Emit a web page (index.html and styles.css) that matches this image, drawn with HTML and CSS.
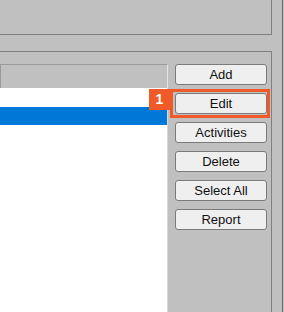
FILE: index.html
```html
<!DOCTYPE html>
<html lang="en">
<head>
  <meta charset="UTF-8" />
  <title>Activity List</title>
  <link rel="stylesheet" href="styles.css">
</head>
<body>
  <div class="window">
    <div class="top-panel"></div>
    <div class="main-panel">
      <div class="list">
        <div class="list-header"></div>
        <div class="list-body">
          <div class="row"></div>
          <div class="row selected"></div>
        </div>
      </div>
      <div class="buttons">
        <button class="btn">Add</button>
        <button class="btn highlighted">Edit<span class="badge">1</span></button>
        <button class="btn">Activities</button>
        <button class="btn">Delete</button>
        <button class="btn">Select All</button>
        <button class="btn">Report</button>
      </div>
    </div>
  </div>
</body>
</html>
```

FILE: styles.css
```css
* {
  margin: 0;
  padding: 0;
  box-sizing: border-box;
}
body {
  background: #c0c0c0;
  font-family: 'Liberation Sans', Arial, sans-serif;
  width: 284px;
  height: 312px;
  overflow: hidden;
}
.window {
  width: 283px;
  height: 312px;
  border-right: 1px solid #6a6a6a;
}
.top-panel {
  width: 272px;
  height: 35px;
  border-right: 1px solid #808080;
  border-bottom: 1px solid #808080;
}
.main-panel {
  margin-top: 16px;
  width: 272px;
  height: 261px;
  border-top: 1px solid #808080;
  border-right: 1px solid #808080;
  display: flex;
}
.list {
  width: 168px;
  padding-top: 12px;
  display: flex;
  flex-direction: column;
}
.list-header {
  height: 24px;
  border: 1px solid #9a9a9a;
  border-right-color: #e4e4e4;
  border-bottom: none;
}
.list-body {
  flex: 1;
  background: white;
  border-right: 1px solid #d8d8d8;
  padding-top: 1px;
}
.row {
  height: 18px;
}
.row.selected {
  background: #0078d7;
}
.buttons {
  padding: 12px 0 0 7px;
  display: flex;
  flex-direction: column;
  gap: 8px;
}
.btn {
  position: relative;
  width: 92px;
  height: 21px;
  background: #efefef;
  border: 1px solid #7a7a7a;
  border-radius: 3px;
  font-family: 'Liberation Sans', Arial, sans-serif;
  font-size: 13px;
  color: #111;
}
.btn.highlighted::after {
  content: '';
  position: absolute;
  left: -6px;
  right: -4px;
  top: -5px;
  bottom: -5px;
  border: 3px solid #f05a28;
}
.badge {
  position: absolute;
  left: -27px;
  top: -5px;
  width: 21px;
  height: 21px;
  background: #f05a28;
  color: white;
  font-weight: bold;
  font-size: 14px;
  line-height: 21px;
  text-align: center;
}
```
